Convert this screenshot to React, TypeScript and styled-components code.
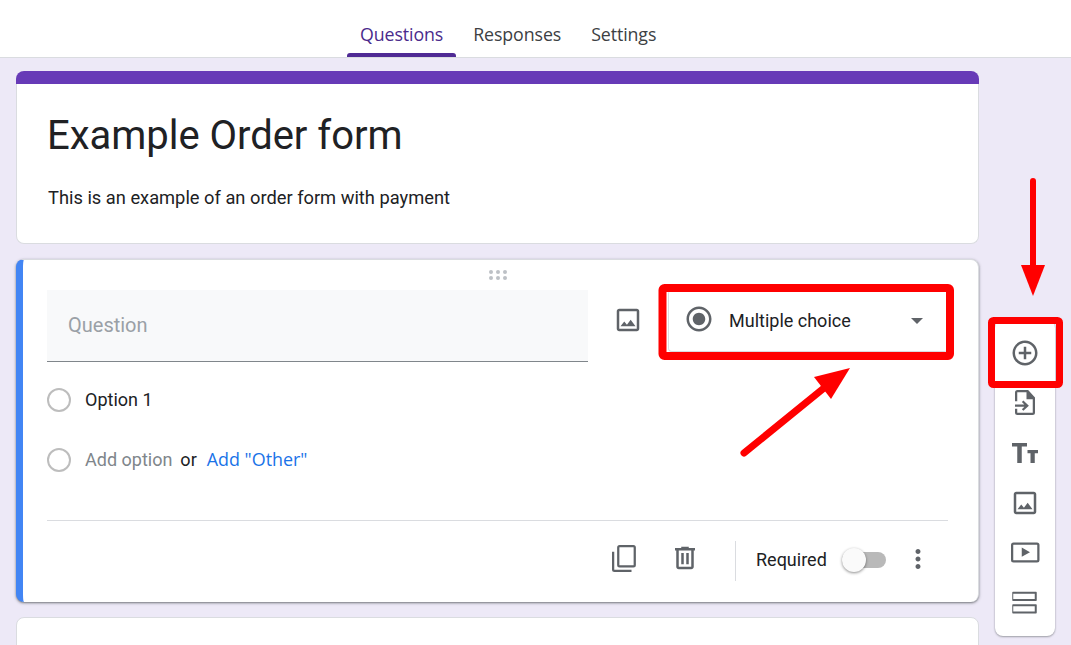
import React from "react";
import styled, { createGlobalStyle } from "styled-components";

const Global = createGlobalStyle`
  html, body { margin: 0; padding: 0; height: 645px; overflow: hidden; background: #ede7f6; }
  body { font-family: Roboto, "Liberation Sans", sans-serif; color: #202124; }
  #root { height: 645px; }
`;

const Page = styled.div`
  position: relative;
  width: 1071px;
  height: 645px;
  overflow: hidden;
  display: flex;
  flex-direction: column;
  background: #ede9f7;
`;

const Header = styled.header`
  flex: none;
  height: 57px;
  box-sizing: content-box;
  background: #fff;
  border-bottom: 1px solid #dadce0;
  display: flex;
  align-items: stretch;
  gap: 4px;
  padding-left: 347px;
`;

const Tab = styled.div<{ $active?: boolean }>`
  position: relative;
  display: flex;
  align-items: center;
  height: 57px;
  padding: 10px 13px 0;
  box-sizing: border-box;
  font-family: "Open Sans", Roboto, sans-serif;
  font-size: 17.8px;
  font-weight: 500;
  letter-spacing: -0.1px;
  color: ${(p) => (p.$active ? "#4a2a8c" : "#3c4043")};
  &::after {
    content: "";
    display: ${(p) => (p.$active ? "block" : "none")};
    position: absolute;
    left: 0;
    right: 0;
    bottom: 0;
    height: 4px;
    background: #4f2a94;
    border-radius: 3px 3px 0 0;
  }
`;

const Main = styled.main`
  flex: 1;
  display: flex;
  align-items: flex-start;
  padding: 13px 0 0 16px;
  gap: 16px;
  min-height: 0;
`;

const Column = styled.div`
  flex: none;
  width: 963px;
  display: flex;
  flex-direction: column;
  gap: 15px;
`;

const TitleCard = styled.section`
  height: 173px;
  display: flex;
  flex-direction: column;
  background: linear-gradient(#673ab7 20px, transparent 20px);
  border-radius: 8px;
  padding-top: 13px;
  box-sizing: border-box;
`;

const TitleBody = styled.div`
  flex: 1;
  box-sizing: border-box;
  background: #fff;
  border: 1px solid #dadce0;
  border-top: 0;
  border-radius: 0 0 8px 8px;
  padding: 26px 30px 0;
`;

const FormTitle = styled.h1`
  margin: 0;
  font-size: 40px;
  font-weight: 400;
  line-height: 52px;
  letter-spacing: -0.03px;
  color: #202124;
`;

const FormDescription = styled.p`
  margin: 24px 0 0 1px;
  font-size: 18.3px;
  line-height: 24px;
  color: #202124;
`;

const QuestionCard = styled.section`
  position: relative;
  height: 343px;
  box-sizing: border-box;
  background: #fff;
  border-radius: 8px;
  border-top: 1px solid #dadce0;
  border-right: 1px solid #dadce0;
  border-left: 7px solid #4285f4;
  box-shadow: 0 1px 2px rgba(60, 64, 67, 0.55), 0 1px 3px 1px rgba(60, 64, 67, 0.15);
  padding: 30px 30px 0 24px;
  display: flex;
  flex-direction: column;
`;

const DragHandle = styled.svg`
  position: absolute;
  top: 10px;
  left: 466px;
  fill: #bdc1c6;
`;

const QuestionRow = styled.div`
  display: flex;
  align-items: flex-start;
  height: 72px;
`;

const QuestionInput = styled.div`
  width: 541px;
  height: 72px;
  box-sizing: border-box;
  background: #f8f9fa;
  border-bottom: 1px solid #80868b;
  display: flex;
  align-items: center;
  padding: 0 21px 2px;
  font-size: 20px;
  color: #9aa0a6;
`;

const IconButton = styled.div<{ $size?: number }>`
  flex: none;
  display: flex;
  align-items: center;
  justify-content: center;
  width: ${(p) => p.$size ?? 30}px;
  height: ${(p) => p.$size ?? 30}px;
  color: #5f6368;
  svg { display: block; width: 100%; height: 100%; fill: currentColor; }
`;

const ImageSlot = styled.div`
  flex: none;
  width: 80px;
  padding: 15px 0 0 25px;
  box-sizing: border-box;
`;

const TypeSelect = styled.div`
  flex: none;
  width: 280px;
  height: 62px;
  box-sizing: border-box;
  border-left: 1px solid #dadce0;
  border-bottom: 1px solid #dadce0;
  border-radius: 4px;
  display: flex;
  align-items: center;
  padding: 0 25px 0 15px;
  svg { margin-top: -4px; }
`;

const TypeLabel = styled.span`
  flex: 1;
  margin-left: 15px;
  font-size: 18px;
  color: #202124;
`;

const Caret = styled.span`
  width: 0;
  height: 0;
  border-left: 6.5px solid transparent;
  border-right: 6.5px solid transparent;
  border-top: 6.5px solid #5f6368;
`;

const OptionRow = styled.div`
  display: flex;
  align-items: center;
  height: 24px;
  margin-top: 26px;
  & + & { margin-top: 36px; }
  font-size: 18px;
  line-height: 22px;
`;

const RadioCircle = styled.span`
  flex: none;
  width: 24px;
  height: 24px;
  box-sizing: border-box;
  border: 2px solid #bdbdbd;
  border-radius: 50%;
  margin-right: 14px;
`;

const OptionText = styled.span`
  color: #202124;
`;

const AddOptionText = styled.span`
  color: #80868b;
`;

const OrText = styled.span`
  color: #202124;
  margin: -1px 10px 0 8px;
`;

const OtherLink = styled.span`
  font-family: "Open Sans", Roboto, sans-serif;
  font-weight: 500;
  font-size: 17.9px;
  color: #1a73e8;
  margin-top: -3px;
`;

const Footer = styled.div`
  margin-top: 48px;
  width: 901px;
  height: 81px;
  box-sizing: border-box;
  border-top: 1px solid #dadce0;
  display: flex;
  align-items: flex-start;
  padding-top: 20px;
`;

const FooterIcons = styled.div`
  margin-left: 562px;
  display: flex;
  gap: 31px;
  padding-top: 2px;
`;

const VerticalRule = styled.div`
  width: 1px;
  height: 40px;
  background: #dadce0;
  margin: 0 20px 0 35px;
`;

const RequiredLabel = styled.span`
  font-size: 18px;
  line-height: 38px;
  color: #202124;
`;

const ToggleTrack = styled.div`
  position: relative;
  width: 44px;
  height: 16px;
  margin: 11px 0 0 15px;
  background: #b9b9b9;
  border-radius: 8px;
`;

const ToggleThumb = styled.div`
  position: absolute;
  left: 0;
  top: -4px;
  width: 24px;
  height: 24px;
  border-radius: 50%;
  background: #fafafa;
  box-shadow: 0 1px 3px rgba(0, 0, 0, 0.45);
`;

const MoreSlot = styled.div`
  margin: 3px 0 0 17px;
`;

const EmptyCard = styled.section`
  height: 120px;
  background: #fff;
  border: 1px solid #dadce0;
  border-radius: 8px;
`;

const Sidebar = styled.aside`
  flex: none;
  width: 60px;
  margin-top: 249px;
  box-sizing: border-box;
  background: #fff;
  border-radius: 8px;
  box-shadow: 0 1px 2px rgba(60, 64, 67, 0.4), 0 0 2px rgba(60, 64, 67, 0.2);
  padding: 8px 0 8px;
  display: flex;
  flex-direction: column;
  align-items: center;
`;

const SideItem = styled.div`
  height: 50px;
  display: flex;
  align-items: center;
  justify-content: center;
`;

const Annotations = styled.svg`
  position: absolute;
  left: 0;
  top: 0;
  pointer-events: none;
`;

const P = {
  image: "M19 3H5c-1.1 0-2 .9-2 2v14c0 1.1.9 2 2 2h14c1.1 0 2-.9 2-2V5c0-1.1-.9-2-2-2zm0 16H5V5h14v14zm-4.86-7.14l-3 3.87L9 13.14 6 17h12l-3.86-5.14z",
  add: "M13 7h-2v4H7v2h4v4h2v-4h4v-2h-4V7zm-1-5C6.48 2 2 6.48 2 12s4.48 10 10 10 10-4.48 10-10S17.52 2 12 2zm0 18c-4.41 0-8-3.59-8-8s3.59-8 8-8 8 3.59 8 8-3.59 8-8 8z",
  importFile: "M6 1.6h8.5L20 7.6V19.6a2 2 0 0 1-2 2H6a2 2 0 0 1-2-2v-3h1.8v3c0 .1.1.2.2.2h12c.1 0 .2-.1.2-.2V9h-5V3.4H6c-.1 0-.2.1-.2.2v7H4v-7a2 2 0 0 1 2-2zM4 13.2h7.5l-2-2 1.2-1.2 4.4 4.1-4.4 4.1-1.2-1.2 2-2H4z",
  text: "M1.6 4h12v2.8H9.4V20H5.8V6.8H1.6zM14 9.6h8.4v2.6h-2.6V20h-3.4v-7.8H14z",
  video: "M2.8 3.6h18.8a2 2 0 0 1 2 2v12a2 2 0 0 1-2 2H2.8a2 2 0 0 1-2-2v-12a2 2 0 0 1 2-2zm0 1.8a.2.2 0 0 0-.2.2v12c0 .1.1.2.2.2h18.8c.1 0 .2-.1.2-.2v-12a.2.2 0 0 0-.2-.2zM9.4 7.6v7.4l6.6-3.7z",
  section: "M2.4 3h18.4c.4 0 .6.2.6.6v6.2c0 .4-.2.6-.6.6H2.4c-.4 0-.6-.2-.6-.6V3.6c0-.4.2-.6.6-.6zm.2 1.6v4.2h17.2V4.6zM2.4 13h18.4c.4 0 .6.2.6.6v6.2c0 .4-.2.6-.6.6H2.4c-.4 0-.6-.2-.6-.6v-6.2c0-.4.2-.6.6-.6zm.2 1.6v4.2h17.2v-4.2z",
  copy: "M8.5 1.5h11a2 2 0 0 1 2 2v14a2 2 0 0 1-2 2h-11a2 2 0 0 1-2-2v-14a2 2 0 0 1 2-2zm0 1.8a.2.2 0 0 0-.2.2v14c0 .1.1.2.2.2h11c.1 0 .2-.1.2-.2v-14a.2.2 0 0 0-.2-.2zM2.4 7h1.8v14.2c0 .1.1.2.2.2H18v1.8H4.4a2 2 0 0 1-2-2z",
  trash: "M15 4V3H9v1H4v2h1v13c0 1.1.9 2 2 2h10c1.1 0 2-.9 2-2V6h1V4h-5zm2 15H7V6h10v13zM9 8h2v9H9zm4 0h2v9h-2z",
  radio: "M12 7c-2.76 0-5 2.24-5 5s2.24 5 5 5 5-2.24 5-5-2.24-5-5-5zm0-5C6.48 2 2 6.48 2 12s4.48 10 10 10 10-4.48 10-10S17.52 2 12 2zm0 18c-4.42 0-8-3.58-8-8s3.58-8 8-8 8 3.58 8 8-3.58 8-8 8z",
  more: "M12 8c1.1 0 2-.9 2-2s-.9-2-2-2-2 .9-2 2 .9 2 2 2zm0 2c-1.1 0-2 .9-2 2s.9 2 2 2 2-.9 2-2-.9-2-2-2zm0 6c-1.1 0-2 .9-2 2s.9 2 2 2 2-.9 2-2-.9-2-2-2z",
};

const Icon = ({ d, size }: { d: string; size?: number }) => (
  <IconButton $size={size}>
    <svg viewBox="0 0 24 24">
      <path d={d} fillRule="evenodd" />
    </svg>
  </IconButton>
);

const sideIcons = [P.add, P.importFile, P.text, P.image, P.video, P.section];

export default function App() {
  return (
    <Page>
      <Global />
      <Header>
        <Tab $active>Questions</Tab>
        <Tab>Responses</Tab>
        <Tab>Settings</Tab>
      </Header>
      <Main>
        <Column>
          <TitleCard>
            <TitleBody>
              <FormTitle>Example Order form</FormTitle>
              <FormDescription>This is an example of an order form with payment</FormDescription>
            </TitleBody>
          </TitleCard>
          <QuestionCard>
            <DragHandle width="18" height="10" viewBox="0 0 18 10">
              {[2, 9, 16].map((x) =>
                [2, 8].map((y) => <circle key={`${x}-${y}`} cx={x} cy={y} r="2" />)
              )}
            </DragHandle>
            <QuestionRow>
              <QuestionInput>Question</QuestionInput>
              <ImageSlot>
                <Icon d={P.image} />
              </ImageSlot>
              <TypeSelect>
                <Icon d={P.radio} />
                <TypeLabel>Multiple choice</TypeLabel>
                <Caret />
              </TypeSelect>
            </QuestionRow>
            <OptionRow>
              <RadioCircle />
              <OptionText>Option 1</OptionText>
            </OptionRow>
            <OptionRow>
              <RadioCircle />
              <AddOptionText>Add option</AddOptionText>
              <OrText>or</OrText>
              <OtherLink>Add "Other"</OtherLink>
            </OptionRow>
            <Footer>
              <FooterIcons>
                <Icon d={P.copy} />
                <Icon d={P.trash} />
              </FooterIcons>
              <VerticalRule />
              <RequiredLabel>Required</RequiredLabel>
              <ToggleTrack>
                <ToggleThumb />
              </ToggleTrack>
              <MoreSlot>
                <Icon d={P.more} />
              </MoreSlot>
            </Footer>
          </QuestionCard>
          <EmptyCard />
        </Column>
        <Sidebar>
          {sideIcons.map((d) => (
            <SideItem key={d}>
              <Icon d={d} />
            </SideItem>
          ))}
        </Sidebar>
      </Main>
      <Annotations width="1071" height="645" viewBox="0 0 1071 645">
        <rect x="662.5" y="288" width="287.5" height="68" fill="none" stroke="#ff0000" strokeWidth="8" rx="2" />
        <rect x="991.5" y="320.5" width="68" height="64" fill="none" stroke="#ff0000" strokeWidth="7" rx="2" />
        <path d="M1033 181V270" stroke="#ff0000" strokeWidth="6" strokeLinecap="round" />
        <path d="M1021 265H1045L1033 296Z" fill="#ff0000" />
        <path d="M744 453L824 388" stroke="#ff0000" strokeWidth="7" strokeLinecap="round" />
        <path d="M850 368L814 377L831 399Z" fill="#ff0000" />
      </Annotations>
    </Page>
  );
}
